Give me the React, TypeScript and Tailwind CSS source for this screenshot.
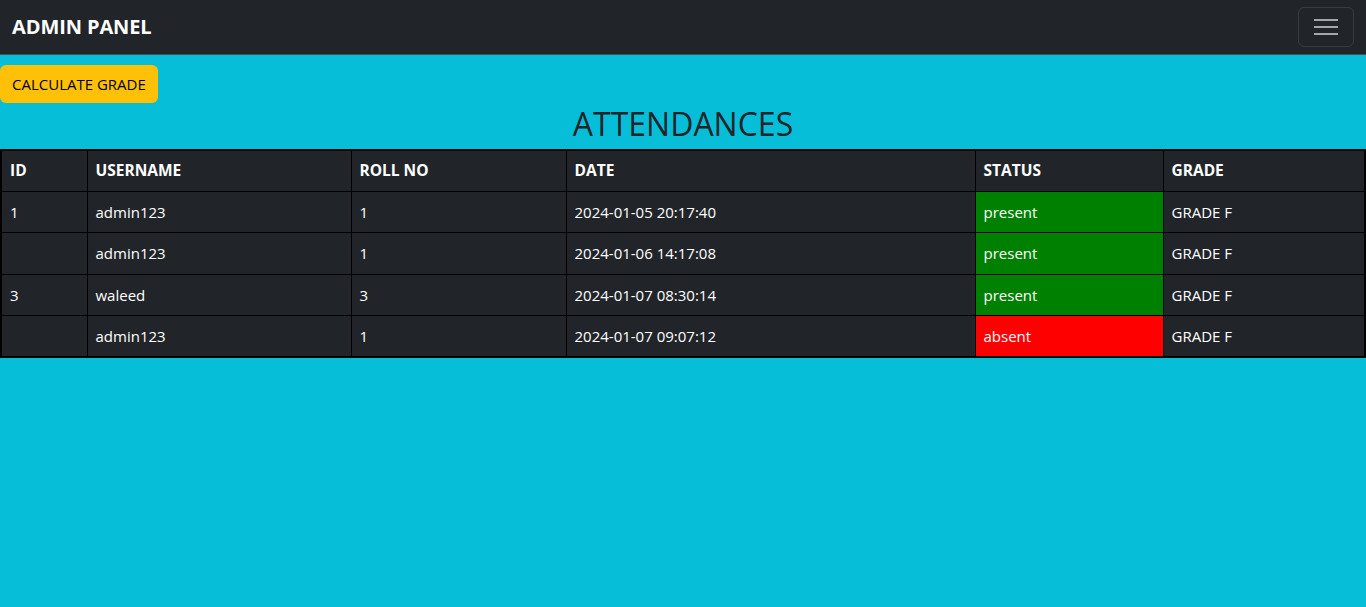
import React from "react";

const rows = [
  { id: "1", username: "admin123", roll: "1", date: "2024-01-05 20:17:40", status: "present", grade: "GRADE F" },
  { id: "", username: "admin123", roll: "1", date: "2024-01-06 14:17:08", status: "present", grade: "GRADE F" },
  { id: "3", username: "waleed", roll: "3", date: "2024-01-07 08:30:14", status: "present", grade: "GRADE F" },
  { id: "", username: "admin123", roll: "1", date: "2024-01-07 09:07:12", status: "absent", grade: "GRADE F" },
];

const cell = "border border-black px-2 h-[41.4px] align-middle";

const App = () => {
  return (
    <div className="min-h-screen bg-[#06bed8] text-[#212529] font-['Open_Sans',sans-serif]">
      <nav className="h-[55px] bg-[#212529] border-b border-[#4a4d52] flex items-center justify-between px-3">
        <span className="text-white font-bold text-[20px] tracking-[-0.1px]">ADMIN PANEL</span>
        <button className="w-[56px] h-[40px] rounded-md border border-white/10 flex flex-col items-center justify-center gap-[5px]">
          <span className="block w-[24px] h-[2px] bg-[#a6a7a9]" />
          <span className="block w-[24px] h-[2px] bg-[#a6a7a9]" />
          <span className="block w-[24px] h-[2px] bg-[#a6a7a9]" />
        </button>
      </nav>

      <div className="pt-[10px]">
        <button className="h-[38px] px-3 rounded-md bg-[#ffc107] text-black text-[15px]">CALCULATE GRADE</button>
      </div>

      <h1 className="text-center text-[32px] font-medium leading-[46px] mt-[-2px] mb-[2px]">ATTENDANCES</h1>

      <table className="w-full table-fixed border-collapse border-2 border-black bg-[#212529] text-white text-[15px]">
        <colgroup>
          <col className="w-[86px]" />
          <col className="w-[264px]" />
          <col className="w-[215px]" />
          <col className="w-[409px]" />
          <col className="w-[188px]" />
          <col />
        </colgroup>
        <thead>
          <tr className="text-left font-bold text-[15.5px]">
            <th className={cell}>ID</th>
            <th className={cell}>USERNAME</th>
            <th className={cell}>ROLL NO</th>
            <th className={cell}>DATE</th>
            <th className={cell}>STATUS</th>
            <th className={cell}>GRADE</th>
          </tr>
        </thead>
        <tbody>
          {rows.map((r, i) => (
            <tr key={i}>
              <td className={cell}>{r.id}</td>
              <td className={cell}>{r.username}</td>
              <td className={cell}>{r.roll}</td>
              <td className={cell}>{r.date}</td>
              <td className={`${cell} ${r.status === "present" ? "bg-[#008000]" : "bg-[#ff0000]"}`}>{r.status}</td>
              <td className={cell}>{r.grade}</td>
            </tr>
          ))}
        </tbody>
      </table>
    </div>
  );
};

export default App;
